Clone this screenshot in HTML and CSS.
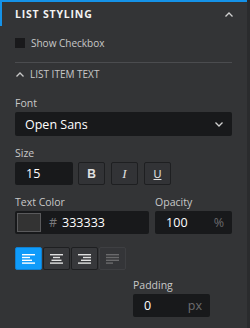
FILE: index.html
```html
<!DOCTYPE html>
<html lang="en">
<head>
    <meta charset="UTF-8">
    <title>List Styling</title>
    <link rel="stylesheet" href="styles.css">
</head>
<body>
<div class="panel">
    <div class="head">
        <span class="head-title">LIST STYLING</span>
        <svg class="chev" width="8" height="5" viewBox="0 0 8 5"><path d="M0.5 4.5 L4 1 L7.5 4.5" fill="none" stroke="#d0d0d0" stroke-width="1.3"/></svg>
    </div>
    <label class="check-row">
        <span class="checkbox"></span>
        <span>Show Checkbox</span>
    </label>
    <div class="divider"></div>
    <div class="sub-head">
        <svg width="8" height="5" viewBox="0 0 8 5"><path d="M0.5 4.5 L4 1 L7.5 4.5" fill="none" stroke="#c8c8c8" stroke-width="1.3"/></svg>
        <span>LIST ITEM TEXT</span>
    </div>

    <div class="fields">
        <div class="label">Font</div>
        <div class="select">
            <span>Open Sans</span>
            <svg width="8" height="5" viewBox="0 0 8 5"><path d="M0.5 0.5 L4 4 L7.5 0.5" fill="none" stroke="#d0d0d0" stroke-width="1.3"/></svg>
        </div>

        <div class="label gap">Size</div>
        <div class="row">
            <div class="input size">15</div>
            <button class="tbtn bold">B</button>
            <button class="tbtn italic">I</button>
            <button class="tbtn under">U</button>
        </div>

        <div class="row top gap">
            <div class="col color-col">
                <div class="label">Text Color</div>
                <div class="input color">
                    <span class="swatch"></span>
                    <span class="hash">#</span>
                    <span>333333</span>
                </div>
            </div>
            <div class="col opacity-col">
                <div class="label">Opacity</div>
                <div class="input unit">
                    <span>100</span>
                    <span class="suffix">%</span>
                </div>
            </div>
        </div>

        <div class="align-group">
            <button class="abtn active">
                <svg width="13" height="10" viewBox="0 0 13 10"><rect x="0" y="0" width="13" height="1.4"/><rect x="0" y="2.8" width="8" height="1.4"/><rect x="0" y="5.6" width="10" height="1.4"/><rect x="0" y="8.4" width="13" height="1.4"/></svg>
            </button>
            <button class="abtn">
                <svg width="13" height="10" viewBox="0 0 13 10"><rect x="0" y="0" width="13" height="1.4"/><rect x="3" y="2.8" width="7" height="1.4"/><rect x="1.5" y="5.6" width="10" height="1.4"/><rect x="0" y="8.4" width="13" height="1.4"/></svg>
            </button>
            <button class="abtn">
                <svg width="13" height="10" viewBox="0 0 13 10"><rect x="0" y="0" width="13" height="1.4"/><rect x="5" y="2.8" width="8" height="1.4"/><rect x="3" y="5.6" width="10" height="1.4"/><rect x="0" y="8.4" width="13" height="1.4"/></svg>
            </button>
            <button class="abtn off">
                <svg width="13" height="10" viewBox="0 0 13 10"><rect x="0" y="0" width="13" height="1.4"/><rect x="0" y="2.8" width="13" height="1.4"/><rect x="0" y="5.6" width="13" height="1.4"/><rect x="0" y="8.4" width="7" height="1.4"/></svg>
            </button>
        </div>

        <div class="padding-col">
            <div class="label">Padding</div>
            <div class="input unit">
                <span>0</span>
                <span class="suffix">px</span>
            </div>
        </div>
    </div>
</div>
</body>
</html>
```

FILE: styles.css
```css
body {
    margin: 0;
    background-color: #2a2b2d;
    font-family: "Open Sans", "Liberation Sans", sans-serif;
    color: #c8c8c8;
}
.panel {
    width: 247px;
    height: 326px;
    background-color: #333436;
    border-top: 2px solid #1592e8;
}
.head {
    display: flex;
    align-items: center;
    justify-content: space-between;
    height: 24px;
    padding: 0 14px 0 13px;
    border-left: 2px solid #1592e8;
}
.head-title {
    font-size: 10.5px;
    font-weight: 700;
    letter-spacing: 0.8px;
    color: #f2f2f2;
}
.check-row {
    display: flex;
    align-items: center;
    gap: 6px;
    height: 10px;
    margin: 12px 15px 0;
    font-size: 10px;
}
.checkbox {
    width: 10px;
    height: 10px;
    background-color: #19191b;
}
.divider {
    margin: 14px 15px 0;
    border-top: 1px solid #4b4c4f;
}
.sub-head {
    display: flex;
    align-items: center;
    gap: 6px;
    height: 22px;
    padding-left: 16px;
    font-size: 10px;
}
.fields {
    padding: 11px 15px 0;
}
.label {
    font-size: 10.5px;
    line-height: 14px;
    margin-bottom: 2px;
}
.gap {
    margin-top: 10px;
}
.select {
    display: flex;
    align-items: center;
    justify-content: space-between;
    height: 24px;
    padding: 0 9px 0 10px;
    border-radius: 2px;
    background-color: #18191b;
    color: #fff;
    font-size: 12.5px;
}
.row {
    display: flex;
    gap: 6px;
}
.row.top {
    align-items: flex-start;
}
.input {
    display: flex;
    align-items: center;
    box-sizing: border-box;
    height: 23px;
    padding: 0 8px 0 11px;
    border-radius: 2px;
    background-color: #18191b;
    color: #fff;
    font-size: 12.5px;
}
.input.size {
    width: 58px;
    margin-right: -1px;
}
.tbtn {
    box-sizing: border-box;
    width: 27px;
    height: 23px;
    padding: 0;
    border: 1px solid #1e1f21;
    border-radius: 2px;
    background-color: #323336;
    color: #e0e0e0;
    font-size: 12px;
}
.tbtn.bold {
    font-weight: 700;
    font-family: "Liberation Sans", sans-serif;
}
.tbtn.italic {
    font-family: "Liberation Serif", serif;
    font-style: italic;
    font-size: 13px;
}
.tbtn.under {
    text-decoration: underline;
    font-size: 11px;
}
.color-col {
    width: 136px;
}
.opacity-col {
    width: 78px;
}
.input.color {
    padding: 0 0 0 2px;
}
.swatch {
    box-sizing: border-box;
    width: 24px;
    height: 19px;
    border: 1px solid #5a5a5c;
    background-color: #333;
    margin-right: 8px;
}
.hash {
    color: #7a7a7c;
    margin-right: 5px;
}
.input.unit {
    justify-content: space-between;
}
.suffix {
    color: #6c6c6e;
}
.align-group {
    display: flex;
    gap: 1px;
    margin-top: 13px;
}
.abtn {
    display: flex;
    align-items: center;
    justify-content: center;
    box-sizing: border-box;
    width: 27px;
    height: 23px;
    padding: 0;
    border: 1px solid #1e1f21;
    border-radius: 2px;
    background-color: #37383b;
    fill: #e0e0e0;
}
.abtn.active {
    background-color: #0f9bfa;
    border-color: #0f7fd0;
    fill: #ffffff;
}
.abtn.off {
    border-color: #3e3f42;
    background-color: #343538;
    fill: #6a6a6c;
}
.padding-col {
    width: 77px;
    margin: 8px 0 0 118px;
}
```
